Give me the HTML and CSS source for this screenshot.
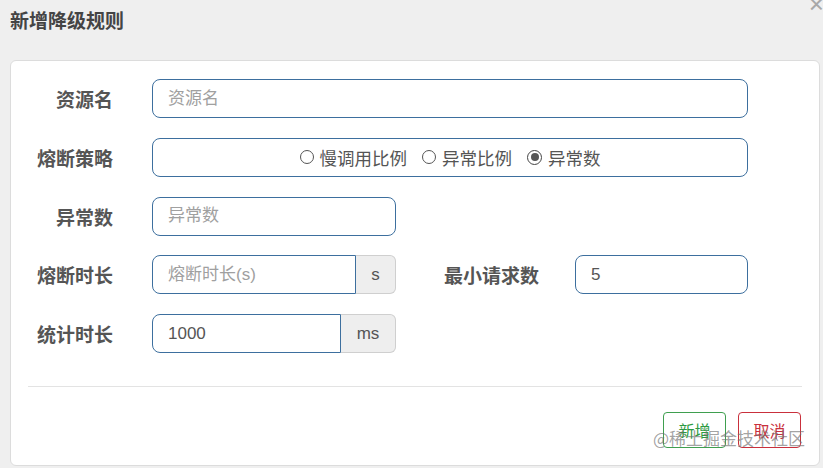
FILE: index.html
```html
<!DOCTYPE html>
<html lang="zh-CN">
<head>
<meta charset="utf-8">
<title>新增降级规则</title>
<link rel="stylesheet" href="styles.css">
</head>
<body>
<div class="dialog">
  <div class="header">
    <h3 class="title">新增降级规则</h3>
    <span class="close">×</span>
  </div>
  <div class="panel">
    <div class="form">
      <div class="row">
        <label class="label">资源名</label>
        <input class="input w-full" type="text" placeholder="资源名">
      </div>
      <div class="row">
        <label class="label">熔断策略</label>
        <div class="input w-full radios">
          <span class="radio"><span class="dot"></span>慢调用比例</span>
          <span class="radio"><span class="dot"></span>异常比例</span>
          <span class="radio"><span class="dot checked"></span>异常数</span>
        </div>
      </div>
      <div class="row">
        <label class="label">异常数</label>
        <input class="input w-half" type="text" placeholder="异常数">
      </div>
      <div class="row">
        <label class="label">熔断时长</label>
        <div class="group">
          <input class="input group-input g1" type="text" placeholder="熔断时长(s)">
          <span class="addon a1">s</span>
        </div>
        <label class="label label2">最小请求数</label>
        <input class="input w-min" type="text" value="5">
      </div>
      <div class="row">
        <label class="label">统计时长</label>
        <div class="group">
          <input class="input group-input g2" type="text" value="1000">
          <span class="addon a2">ms</span>
        </div>
      </div>
    </div>
    <div class="divider"></div>
    <div class="footer">
      <button class="btn btn-ok">新增</button>
      <button class="btn btn-cancel">取消</button>
    </div>
    <span class="watermark">@稀土掘金技术社区</span>
  </div>
</div>
</body>
</html>
```
FILE: styles.css
```css
* { box-sizing: border-box; }
html, body {
  margin: 0;
  padding: 0;
  background: #efefef;
  font-family: "Liberation Sans", "Noto Sans CJK SC", sans-serif;
  width: 823px;
  height: 468px;
  overflow: hidden;
}
.dialog {
  position: relative;
  width: 823px;
  height: 468px;
}
.header {
  height: 60px;
  padding: 9px 0 0 10px;
}
.title {
  margin: 0;
  font-size: 19px;
  line-height: 22px;
  font-weight: bold;
  color: #444;
  font-family: "Noto Sans CJK SC", sans-serif;
}
.close {
  position: absolute;
  right: -1px;
  top: -9px;
  font-size: 26px;
  line-height: 26px;
  color: #a8a8a8;
  font-family: "Liberation Sans", sans-serif;
}
.panel {
  position: relative;
  margin-left: 10px;
  width: 810px;
  height: 406px;
  background: #fff;
  border: 1px solid #dcdcdc;
  border-radius: 6px;
  padding: 18px 17px 17px 0;
}
.form {
  display: flex;
  flex-direction: column;
  gap: 19.75px;
}
.row {
  display: flex;
  align-items: center;
  height: 39px;
}
.label {
  width: 102px;
  margin-right: 39px;
  text-align: right;
  font-size: 19px;
  font-weight: bold;
  color: #555;
  font-family: "Noto Sans CJK SC", sans-serif;
}
.label2 {
  width: 143px;
  margin-right: 36px;
}
.input {
  height: 39px;
  border: 1px solid #3d6f9e;
  border-radius: 8px;
  padding: 0 0 0 15px;
  font-size: 17px;
  color: #555;
  font-family: "Liberation Sans", "Noto Sans CJK SC", sans-serif;
  background: #fff;
  outline: none;
}
.input::placeholder { color: #a0a0a0; }
.w-full { width: 596px; }
.w-half { width: 244px; }
.w-min { width: 173px; }
.radios {
  display: flex;
  align-items: center;
  justify-content: center;
  gap: 15px;
  padding: 0;
  color: #555;
  font-family: "Noto Sans CJK SC", sans-serif;
}
.radio {
  display: flex;
  align-items: center;
  gap: 6px;
  font-size: 17.5px;
}
.dot {
  width: 14px;
  height: 14px;
  border: 1px solid #555;
  border-radius: 50%;
  display: inline-flex;
  align-items: center;
  justify-content: center;
}
.dot.checked {
  width: 15px;
  height: 15px;
  border: 1.5px solid #444;
}
.dot.checked::after {
  content: "";
  width: 8px;
  height: 8px;
  border-radius: 50%;
  background: #555;
}
.group {
  display: flex;
  width: 244px;
  height: 39px;
}
.group-input {
  border-radius: 8px 0 0 8px;
}
.g1 { width: 204px; }
.g2 { width: 189px; }
.addon {
  flex: 1;
  display: flex;
  align-items: center;
  justify-content: center;
  background: #eeeeee;
  border: 1px solid #cfcfcf;
  border-left: none;
  border-radius: 0 6px 6px 0;
  font-size: 17px;
  color: #555;
}
.divider {
  margin: 33px 0 25px 17px;
  height: 1px;
  background: #e3e3e3;
}
.footer {
  display: flex;
  justify-content: flex-end;
  gap: 12px;
  padding-right: 1px;
}
.btn {
  width: 63px;
  height: 36px;
  background: #fff;
  border-radius: 4px;
  font-size: 16px;
  font-family: "Noto Sans CJK SC", sans-serif;
  padding: 0;
}
.btn-ok {
  border: 1px solid #3f9f4f;
  color: #2e9a42;
}
.btn-cancel {
  border: 1px solid #c9303c;
  color: #c9303c;
}
.watermark {
  position: absolute;
  left: 642px;
  top: 364px;
  font-size: 17px;
  color: rgba(110, 110, 110, 0.65);
  font-family: "Noto Sans CJK SC", sans-serif;
  white-space: nowrap;
}
```
